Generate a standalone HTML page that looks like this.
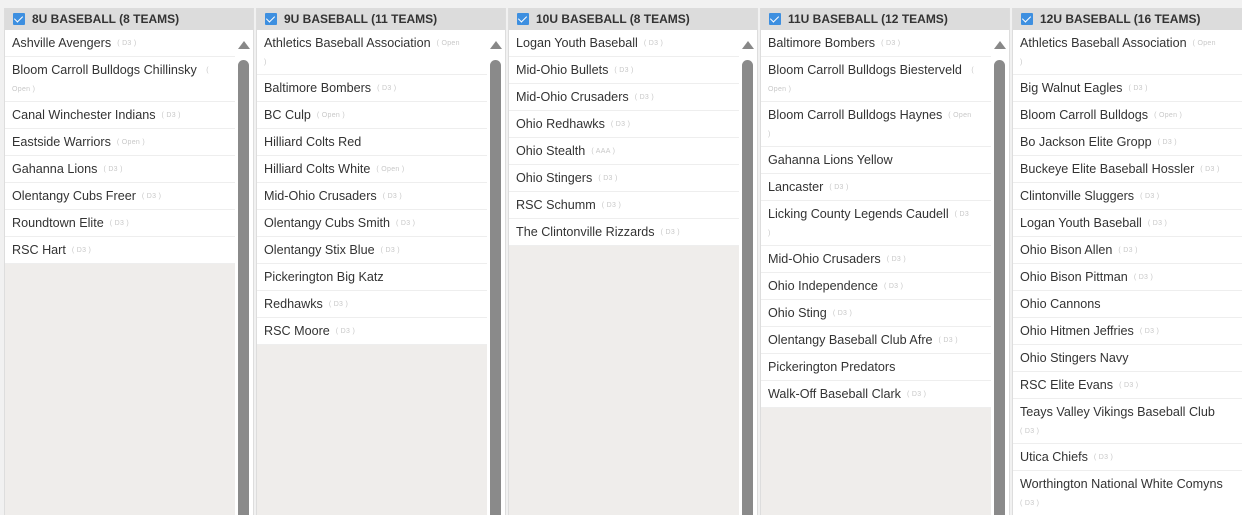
<!DOCTYPE html>
<html><head><meta charset="utf-8"><style>
*{margin:0;padding:0;box-sizing:border-box}
html,body{width:1242px;height:515px;overflow:hidden}
body{background:#f1f1f1;font-family:"Liberation Sans",Arial,sans-serif;position:relative}
.col{position:absolute;top:8px;width:250px;height:520px;background:#efedeb;border-left:1px solid #ddd;border-right:1px solid #ddd;overflow:hidden}
.hd{height:22px;background:#dcdcdc;font-weight:bold;font-size:12px;color:#333;line-height:22px;padding-left:27px;position:relative}
.hd .cb{position:absolute;left:8px;top:5px;width:12px;height:12px;background:#3d8fe0;border-radius:1px}
.hd .cb:after{content:"";position:absolute;left:3px;top:1px;width:4px;height:7px;border:solid #fff;border-width:0 1.5px 1.5px 0;transform:rotate(45deg)}
.list{position:absolute;left:0;top:22px;width:230px}
.r{background:#fff;border-bottom:1px solid #eee;padding:4px 0 0 7px;font-size:12.6px;line-height:18px;color:#333;height:27px;overflow:hidden;white-space:nowrap}
.r.d{height:45px}
.r.d br+.t{margin-top:3px}
.t{font-size:7px;line-height:10px;color:#c8c8c8;margin-left:6px;letter-spacing:.3px;vertical-align:middle;display:inline-block}
.sb{position:absolute;left:230px;top:22px;width:19px;height:500px;background:#fff}
.sb .up{position:absolute;left:3px;top:11px;width:0;height:0;border-left:6px solid transparent;border-right:6px solid transparent;border-bottom:8px solid #888}
.sb .th{position:absolute;left:3px;top:30px;width:11px;height:480px;background:#8a8a8a;border-radius:6px}
</style></head><body>

<div class="col" style="left:4px">
<div class="hd"><span class="cb"></span>8U BASEBALL (8 TEAMS)</div>
<div class="list">
<div class="r">Ashville Avengers<span class="t">( D3 )</span></div>
<div class="r d">Bloom Carroll Bulldogs Chillinsky <span class="t">(</span><br><span class="t" style="margin-left:0">Open )</span></div>
<div class="r">Canal Winchester Indians<span class="t">( D3 )</span></div>
<div class="r">Eastside Warriors<span class="t">( Open )</span></div>
<div class="r">Gahanna Lions<span class="t">( D3 )</span></div>
<div class="r">Olentangy Cubs Freer<span class="t">( D3 )</span></div>
<div class="r">Roundtown Elite<span class="t">( D3 )</span></div>
<div class="r">RSC Hart<span class="t">( D3 )</span></div>
</div>
<div class="sb"><div class="up"></div><div class="th"></div></div>
</div>

<div class="col" style="left:256px">
<div class="hd"><span class="cb"></span>9U BASEBALL (11 TEAMS)</div>
<div class="list">
<div class="r d">Athletics Baseball Association<span class="t">( Open</span><br><span class="t" style="margin-left:0">)</span></div>
<div class="r">Baltimore Bombers<span class="t">( D3 )</span></div>
<div class="r">BC Culp<span class="t">( Open )</span></div>
<div class="r">Hilliard Colts Red</div>
<div class="r">Hilliard Colts White<span class="t">( Open )</span></div>
<div class="r">Mid-Ohio Crusaders<span class="t">( D3 )</span></div>
<div class="r">Olentangy Cubs Smith<span class="t">( D3 )</span></div>
<div class="r">Olentangy Stix Blue<span class="t">( D3 )</span></div>
<div class="r">Pickerington Big Katz</div>
<div class="r">Redhawks<span class="t">( D3 )</span></div>
<div class="r">RSC Moore<span class="t">( D3 )</span></div>
</div>
<div class="sb"><div class="up"></div><div class="th"></div></div>
</div>

<div class="col" style="left:508px">
<div class="hd"><span class="cb"></span>10U BASEBALL (8 TEAMS)</div>
<div class="list">
<div class="r">Logan Youth Baseball<span class="t">( D3 )</span></div>
<div class="r">Mid-Ohio Bullets<span class="t">( D3 )</span></div>
<div class="r">Mid-Ohio Crusaders<span class="t">( D3 )</span></div>
<div class="r">Ohio Redhawks<span class="t">( D3 )</span></div>
<div class="r">Ohio Stealth<span class="t">( AAA )</span></div>
<div class="r">Ohio Stingers<span class="t">( D3 )</span></div>
<div class="r">RSC Schumm<span class="t">( D3 )</span></div>
<div class="r">The Clintonville Rizzards<span class="t">( D3 )</span></div>
</div>
<div class="sb"><div class="up"></div><div class="th"></div></div>
</div>

<div class="col" style="left:760px">
<div class="hd"><span class="cb"></span>11U BASEBALL (12 TEAMS)</div>
<div class="list">
<div class="r">Baltimore Bombers<span class="t">( D3 )</span></div>
<div class="r d">Bloom Carroll Bulldogs Biesterveld <span class="t">(</span><br><span class="t" style="margin-left:0">Open )</span></div>
<div class="r d">Bloom Carroll Bulldogs Haynes<span class="t">( Open</span><br><span class="t" style="margin-left:0">)</span></div>
<div class="r">Gahanna Lions Yellow</div>
<div class="r">Lancaster<span class="t">( D3 )</span></div>
<div class="r d">Licking County Legends Caudell<span class="t">( D3</span><br><span class="t" style="margin-left:0">)</span></div>
<div class="r">Mid-Ohio Crusaders<span class="t">( D3 )</span></div>
<div class="r">Ohio Independence<span class="t">( D3 )</span></div>
<div class="r">Ohio Sting<span class="t">( D3 )</span></div>
<div class="r">Olentangy Baseball Club Afre<span class="t">( D3 )</span></div>
<div class="r">Pickerington Predators</div>
<div class="r">Walk-Off Baseball Clark<span class="t">( D3 )</span></div>
</div>
<div class="sb"><div class="up"></div><div class="th"></div></div>
</div>

<div class="col" style="left:1012px">
<div class="hd"><span class="cb"></span>12U BASEBALL (16 TEAMS)</div>
<div class="list">
<div class="r d">Athletics Baseball Association<span class="t">( Open</span><br><span class="t" style="margin-left:0">)</span></div>
<div class="r">Big Walnut Eagles<span class="t">( D3 )</span></div>
<div class="r">Bloom Carroll Bulldogs<span class="t">( Open )</span></div>
<div class="r">Bo Jackson Elite Gropp<span class="t">( D3 )</span></div>
<div class="r">Buckeye Elite Baseball Hossler<span class="t">( D3 )</span></div>
<div class="r">Clintonville Sluggers<span class="t">( D3 )</span></div>
<div class="r">Logan Youth Baseball<span class="t">( D3 )</span></div>
<div class="r">Ohio Bison Allen<span class="t">( D3 )</span></div>
<div class="r">Ohio Bison Pittman<span class="t">( D3 )</span></div>
<div class="r">Ohio Cannons</div>
<div class="r">Ohio Hitmen Jeffries<span class="t">( D3 )</span></div>
<div class="r">Ohio Stingers Navy</div>
<div class="r">RSC Elite Evans<span class="t">( D3 )</span></div>
<div class="r d">Teays Valley Vikings Baseball Club<br><span class="t" style="margin-left:0">( D3 )</span></div>
<div class="r">Utica Chiefs<span class="t">( D3 )</span></div>
<div class="r d">Worthington National White Comyns<br><span class="t" style="margin-left:0">( D3 )</span></div>
</div>
<div class="sb"><div class="up"></div><div class="th"></div></div>
</div>

</body></html>
